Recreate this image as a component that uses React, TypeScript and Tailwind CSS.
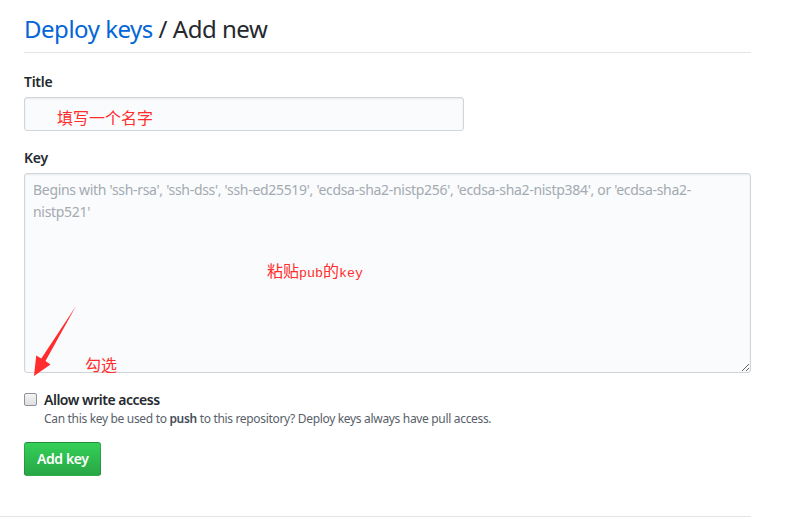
import React from 'react';

const sans = { fontFamily: '"Noto Sans", "Open Sans", sans-serif' };

// red hand-drawn notes laid over the form
function Notes() {
    return (
        <>
            <div className="absolute left-[57px] top-[106px] text-[16px] leading-[22px] text-[#ff2d2d] [font-family:'Noto_Sans_CJK_SC',sans-serif]">
                填写一个名字
            </div>
            <div className="absolute left-[267px] top-[259px] text-[16px] leading-[22px] text-[#ff2d2d] [font-family:'Noto_Sans_CJK_SC',sans-serif]">
                粘贴<span className="text-[13.3px] [font-family:'Liberation_Mono',monospace]">pub</span>的<span className="text-[13.3px] [font-family:'Liberation_Mono',monospace]">key</span>
            </div>
            <div className="absolute left-[85px] top-[353px] text-[16px] leading-[22px] text-[#ff2d2d] [font-family:'Noto_Sans_CJK_SC',sans-serif]">
                勾选
            </div>
            <svg className="absolute left-0 top-0 pointer-events-none" width="100" height="400">
                <polygon points="76,306 45.5,361 50.5,364.5 34,376 36.2,355.5 41.3,358.4" fill="#ff2d2d" />
            </svg>
        </>
    );
}

export default function App() {
    return (
        <div className="relative w-[798px] h-[520px] bg-white overflow-hidden text-[#24292e]" style={sans}>
            <div className="w-[727px] ml-[24px] pt-[14px]">
                {/* Subhead */}
                <div className="pb-[8px] border-b border-[#e1e4e8]">
                    <h1 className="text-[24px] leading-[30px] font-normal tracking-[-0.02em]">
                        <a className="text-[#0366d6]">Deploy keys</a> / Add new
                    </h1>
                </div>

                {/* Title */}
                <div className="mt-[18px]">
                    <label className="block text-[14px] leading-[21px] font-semibold mb-[5px] tracking-[-0.02em]">Title</label>
                    <input
                        className="block w-[440px] h-[34px] px-[8px] text-[14px] bg-[#fafbfc] border border-[#d1d5da] rounded-[3px] shadow-[inset_0_1px_2px_rgba(27,31,35,0.075)] outline-none"
                    />
                </div>

                {/* Key */}
                <div className="mt-[16px]">
                    <label className="block text-[14px] leading-[21px] font-semibold mb-[5px] tracking-[-0.02em]">Key</label>
                    <textarea
                        className="block w-[727px] h-[200px] pl-[8px] pr-[40px] py-[5px] text-[14px] leading-[22px] tracking-[-0.022em] bg-[#fafbfc] border border-[#d1d5da] rounded-[3px] shadow-[inset_0_1px_2px_rgba(27,31,35,0.075)] outline-none placeholder:text-[#a3aab1]"
                        placeholder="Begins with 'ssh-rsa', 'ssh-dss', 'ssh-ed25519', 'ecdsa-sha2-nistp256', 'ecdsa-sha2-nistp384', or 'ecdsa-sha2-nistp521'"
                    />
                </div>

                {/* Write access */}
                <div className="mt-[16px] flex items-start gap-[7px]">
                    <input
                        type="checkbox"
                        className="appearance-none mt-[4px] w-[13px] h-[13px] rounded-[2px] border border-[#8f8f9d] bg-gradient-to-b from-[#f4f4f4] to-[#dedede]"
                    />
                    <div>
                        <div className="text-[14px] leading-[21px] font-semibold tracking-[-0.035em]">Allow write access</div>
                        <p className="text-[12px] leading-[18px] text-[#586069] tracking-[-0.027em]">
                            Can this key be used to <strong className="font-semibold text-[#444d56]">push</strong> to this repository? Deploy keys always have pull access.
                        </p>
                    </div>
                </div>

                <button className="mt-[14px] h-[34px] px-[12px] text-[14px] leading-[20px] font-semibold tracking-[-0.03em] text-white rounded-[3px] border border-[rgba(27,31,35,0.2)] bg-gradient-to-b from-[#34d058] to-[#28a745]">
                    Add key
                </button>
            </div>

            <div className="absolute left-0 top-[516px] w-[751px] border-t border-[#e1e4e8]" />
            <Notes />
        </div>
    );
}
